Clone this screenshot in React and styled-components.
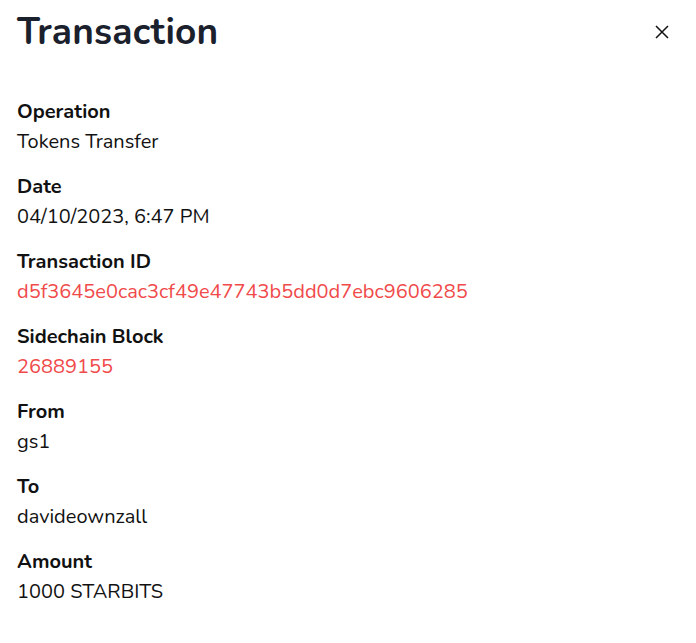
import React from "react";
import styled, { createGlobalStyle } from "styled-components";

const GlobalStyle = createGlobalStyle`
  body {
    margin: 0;
    background: #fff;
    font-family: "Nunito", "Lato", "Open Sans", sans-serif;
  }
`;

const Panel = styled.div`
  width: 696px;
  min-height: 643px;
  box-sizing: border-box;
  padding: 10px 18px 0 17px;
`;

const Header = styled.div`
  display: flex;
  align-items: center;
  justify-content: space-between;
  height: 44px;
  margin-bottom: 43px;
`;

const Title = styled.h1`
  margin: 0;
  font-size: 37px;
  font-weight: 700;
  color: #1a202c;
  letter-spacing: 0.2px;
`;

const CloseButton = styled.button`
  border: none;
  background: none;
  padding: 0;
  margin-right: 9px;
  width: 14px;
  height: 14px;
  display: flex;
  cursor: pointer;
`;

const Field = styled.div`
  display: flex;
  flex-direction: column;
  margin-bottom: 15px;
`;

const Label = styled.div`
  font-size: 20px;
  line-height: 30px;
  font-weight: 700;
  color: #111;
`;

const Value = styled.div`
  font-size: 20px;
  line-height: 30px;
  color: ${(p) => (p.$link ? "#f04a4a" : "#111")};
`;

const fields = [
  { label: "Operation", value: "Tokens Transfer" },
  { label: "Date", value: "04/10/2023, 6:47 PM" },
  { label: "Transaction ID", value: "d5f3645e0cac3cf49e47743b5dd0d7ebc9606285", link: true },
  { label: "Sidechain Block", value: "26889155", link: true },
  { label: "From", value: "gs1" },
  { label: "To", value: "davideownzall" },
  { label: "Amount", value: "1000 STARBITS" },
];

const App = () => {
  return (
    <>
      <GlobalStyle />
      <Panel>
        <Header>
          <Title>Transaction</Title>
          <CloseButton aria-label="Close">
            <svg width="14" height="14" viewBox="0 0 14 14">
              <path d="M1 1 L13 13 M13 1 L1 13" stroke="#111" strokeWidth="1.5" />
            </svg>
          </CloseButton>
        </Header>
        {fields.map((f) => (
          <Field key={f.label}>
            <Label>{f.label}</Label>
            <Value $link={f.link}>{f.value}</Value>
          </Field>
        ))}
      </Panel>
    </>
  );
};

export default App;
